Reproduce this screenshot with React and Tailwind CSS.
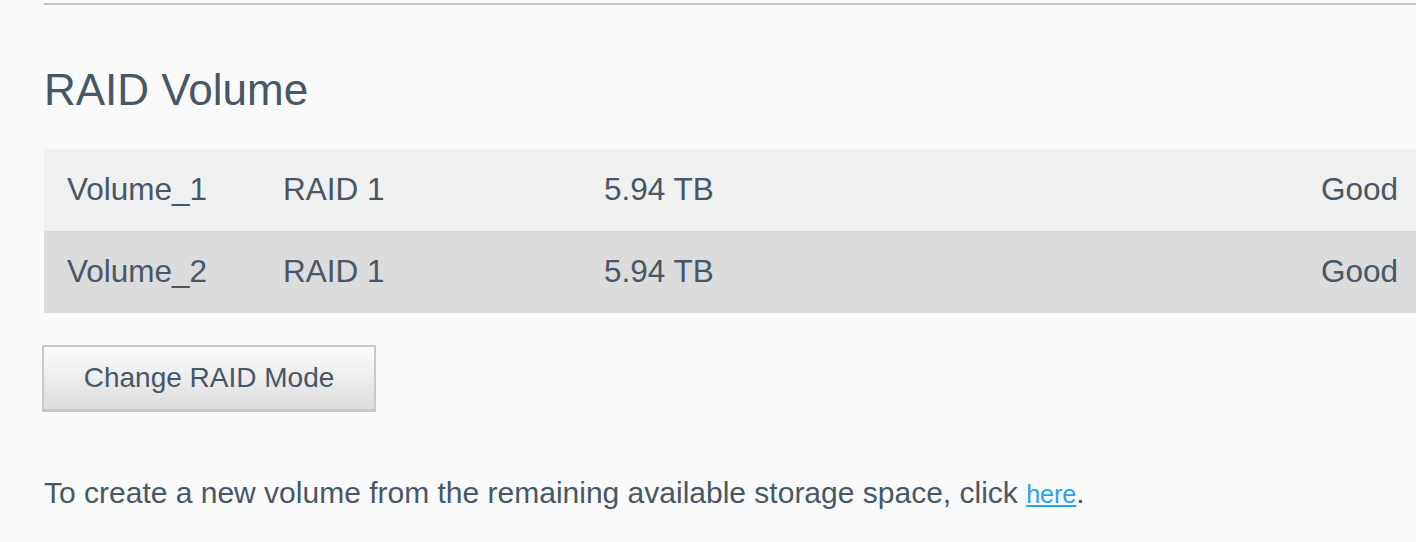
import React from 'react';

const volumes = [
  { name: 'Volume_1', mode: 'RAID 1', size: '5.94 TB', status: 'Good', bg: 'bg-[#f0f0f0]' },
  { name: 'Volume_2', mode: 'RAID 1', size: '5.94 TB', status: 'Good', bg: 'bg-[#dcdcdc]' },
];

export default function App() {
  return (
    <div className="min-h-screen w-full bg-[#fafafa] text-[#475766] font-['Liberation_Sans',Arial,sans-serif] overflow-hidden">
      <div className="pl-[44px]">
        <div className="mt-[3px] h-[2px] bg-[#c4c4c4]" />

        <h1 className="mt-[63px] text-[44px] leading-[44px] font-normal">RAID Volume</h1>

        <div className="mt-[37px]">
          {volumes.map((v) => (
            <div key={v.name} className={`flex items-center h-[82px] pl-[23px] pr-[18px] text-[31.5px] ${v.bg}`}>
              <span className="w-[216px]">{v.name}</span>
              <span className="w-[321px]">{v.mode}</span>
              <span className="flex-1">{v.size}</span>
              <span>{v.status}</span>
            </div>
          ))}
        </div>

        <button className="mt-[32px] -ml-[2px] w-[334px] h-[67px] border-2 border-b-[3px] border-[#c8c8c8] bg-gradient-to-b from-[#fcfcfc] to-[#dddddd] text-[28px] text-[#475766]">
          Change RAID Mode
        </button>

        <p className="mt-[64px] text-[30px] leading-[34px] whitespace-nowrap">
          To create a new volume from the remaining available storage space, click{' '}
          <a href="#" className="text-[25px] text-[#2aa0f0] underline underline-offset-2">here</a>.
        </p>
      </div>
    </div>
  );
}
